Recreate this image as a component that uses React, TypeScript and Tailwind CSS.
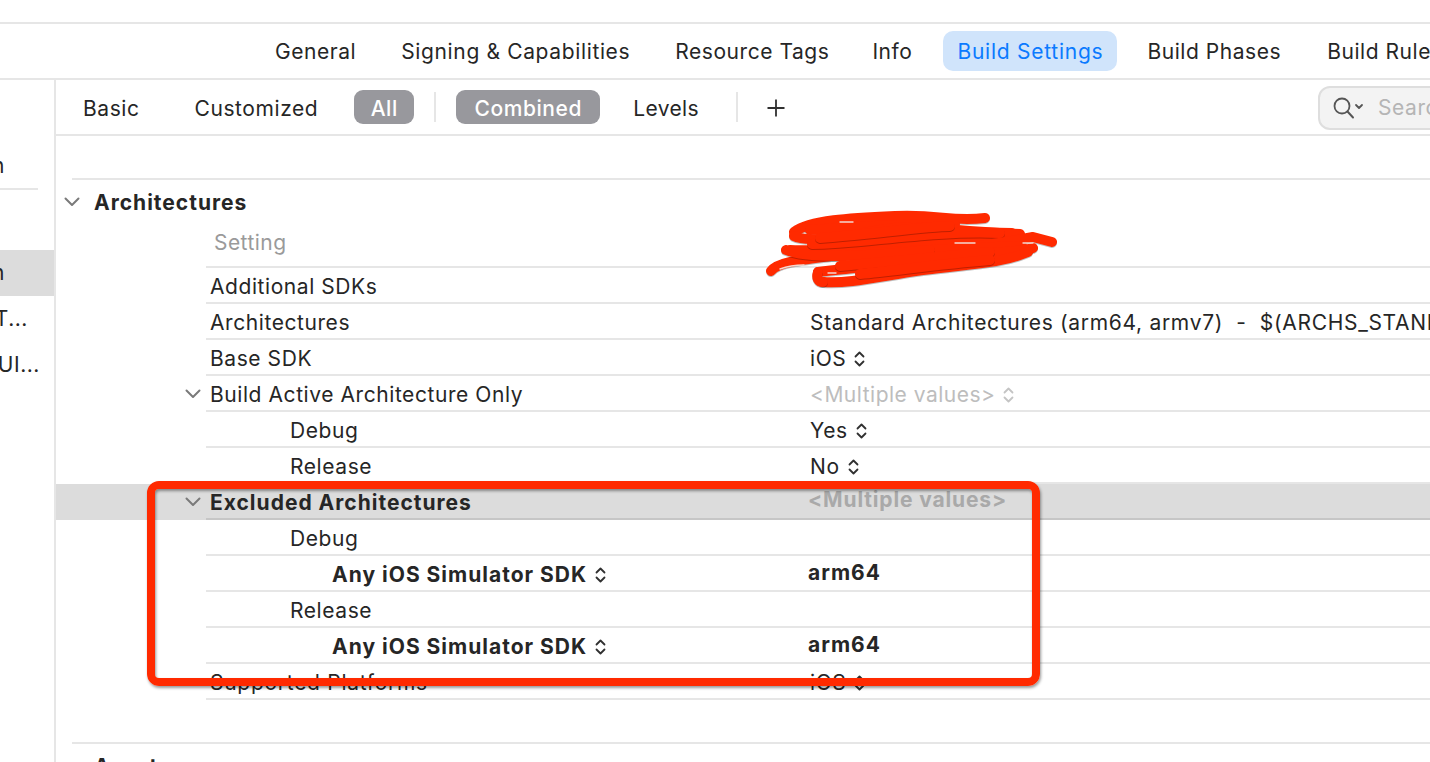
const INK = "text-[#262626]";

function Chevron({ className = "" }: { className?: string }) {
  return (
    <svg width="16" height="10" viewBox="0 0 16 10" fill="none" className={className}>
      <path d="M1.5 1.5 8 8l6.5-6.5" stroke="#7a7a7a" strokeWidth="2" strokeLinecap="round" strokeLinejoin="round" />
    </svg>
  );
}

function UpDown({ light = false }: { light?: boolean }) {
  const c = light ? "#c4c4c4" : "#303030";
  return (
    <svg width="11" height="16" viewBox="0 0 11 16" fill="none" className="ml-[8px] shrink-0">
      <path d="M1.5 5.5 5.5 1.5l4 4M1.5 10.5l4 4 4-4" stroke={c} strokeWidth="1.8" strokeLinecap="round" strokeLinejoin="round" />
    </svg>
  );
}

type RowProps = {
  label: string;
  indent?: number;
  bold?: boolean;
  open?: boolean;
  selected?: boolean;
  value?: string;
  valueKind?: "plain" | "select" | "muted" | "mutedBold" | "bold";
  labelSelect?: boolean;
  wideLabel?: boolean;
};

const indents: Record<number, string> = { 0: "pl-[4px]", 1: "pl-[84px]", 2: "pl-[126px]" };
const BOLD = "font-bold tracking-[1px]";

function Row({ label, indent = 0, bold, open, selected, value, valueKind = "plain", labelSelect, wideLabel }: RowProps) {
  return (
    <div className={`flex ${selected ? "bg-[#dcdcdc]" : ""}`}>
      <div className="w-[150px] shrink-0 flex items-center justify-end pr-[5px]">{open && <Chevron />}</div>
      <div className={`flex-1 h-9 border-b-2 flex items-center whitespace-pre ${selected ? "border-[#c6c6c6]" : "border-[#e6e6e6]"}`}>
        <div className={`w-[604px] shrink-0 flex items-center pt-[3px] ${indents[indent]} ${bold ? BOLD : ""} ${wideLabel ? "tracking-[0.72px]" : ""}`}>
          <span>{label}</span>
          {labelSelect && <UpDown />}
        </div>
        {value && valueKind === "plain" && <span className="pt-[3px] tracking-[0.69px]">{value}</span>}
        {value && valueKind === "select" && (
          <span className="flex items-center pt-[3px]">
            {value}
            <UpDown />
          </span>
        )}
        {value && valueKind === "muted" && (
          <span className="flex items-center pt-[3px] text-[#bdbdbd] tracking-[0.5px]">
            {value}
            <UpDown light />
          </span>
        )}
        {value && valueKind === "mutedBold" && <span className="-ml-[2px] -mt-[2px] text-[#a9a9a9] font-bold tracking-[0.85px]">{value}</span>}
        {value && valueKind === "bold" && <span className={`-ml-[2px] -mt-[1px] ${BOLD}`}>{value}</span>}
      </div>
    </div>
  );
}

function SectionHeader({ title, chevron = true }: { title: string; chevron?: boolean }) {
  return (
    <div className={`h-11 flex items-center pl-[8px] ${BOLD}`}>
      {chevron ? <Chevron /> : <span className="w-4" />}
      <span className="ml-[14px] pt-[1px]">{title}</span>
    </div>
  );
}

function SideItem({ text, className = "" }: { text: string; className?: string }) {
  return <div className={`flex justify-end overflow-hidden whitespace-nowrap ${className}`}>{text}</div>;
}

const strokes = [
  "M44 32C60 20 100 18 145 16S200 22 235 18",
  "M60 30C110 26 160 24 205 24",
  "M44 36C55 42 90 38 130 30S200 32 262 33",
  "M40 50C70 52 120 46 166 44S240 32 270 34",
  "M62 44C110 44 180 30 250 33",
  "M70 38C120 34 180 26 200 26",
  "M100 54C160 54 230 48 283 37L302 42",
  "M21 71C28 62 50 60 81 56S180 50 272 46",
  "M68 72C120 66 170 62 216 56S270 52 283 48",
  "M73 82C100 84 130 76 173 70S250 64 278 52",
  "M68 72C66 78 68 82 73 82",
  "M36 50C60 60 120 56 180 50",
  "M90 66C130 62 180 58 240 52",
  "M110 74C150 70 190 64 240 60",
];

export default function App() {
  return (
    <div
      className={`relative w-[1430px] h-[762px] overflow-hidden bg-white text-[21px] leading-[28px] tracking-[0.57px] ${INK}`}
      style={{ fontFamily: "Inter, 'Liberation Sans', sans-serif" }}
    >
      <div className="h-6 border-b-2 border-[#e6e6e6]" />

      <div className="h-14 border-b-2 border-[#e6e6e6] flex items-center pl-[275px] gap-[45px] whitespace-nowrap tracking-[0.55px]">
        <span className="pt-[2px]">General</span>
        <span className="pt-[2px] tracking-[0.64px]">Signing &amp; Capabilities</span>
        <span className="pt-[2px]">Resource Tags</span>
        <span className="pt-[2px] -ml-[2px]">Info</span>
        <span className="-ml-[14px] -mr-[15px] h-10 pt-[2px] pl-[14px] pr-[14px] flex items-center rounded-[10px] bg-[#d0e4fb] text-[#0a7aff] tracking-[0.75px]">Build Settings</span>
        <span className="pt-[2px]">Build Phases</span>
        <span className="pt-[2px] ml-[1px]">Build Rules</span>
      </div>

      <div className="flex h-[682px]">
        <aside className="w-[56px] shrink-0 border-r-2 border-[#e6e6e6] pt-[72px]">
          <SideItem text="Main" className="pr-[49px]" />
          <div className="mt-[8px] h-[2px] w-[38px] bg-[#e6e6e6]" />
          <SideItem text="Main" className="mt-[60px] h-[46px] items-center bg-[#dcdcdc] pr-[49px]" />
          <SideItem text="AppT..." className="mt-[8px] h-[30px] items-center pr-[26px]" />
          <SideItem text="AppUI..." className="mt-[16px] h-[30px] items-center pr-[14px]" />
        </aside>

        <main className="flex-1 min-w-0 overflow-hidden">
          <div className="relative h-14 border-b-2 border-[#e6e6e6] flex items-center pl-[27px] whitespace-nowrap">
            <span className="pt-[3px]">Basic</span>
            <span className="ml-[55px] pt-[3px]">Customized</span>
            <span className="ml-[36px] h-[34px] w-[60px] pt-[3px] flex items-center justify-center rounded-[9px] bg-[#98989d] text-white font-medium">All</span>
            <span className="ml-[20px] h-[30px] w-[2px] bg-[#e6e6e6]" />
            <span className="ml-[20px] h-[34px] w-[144px] pt-[3px] flex items-center justify-center rounded-[9px] bg-[#98989d] text-white font-medium">Combined</span>
            <span className="ml-[33px] pt-[3px] tracking-[0.35px]">Levels</span>
            <span className="ml-[37px] h-[30px] w-[2px] bg-[#e6e6e6]" />
            <svg width="20" height="20" viewBox="0 0 20 20" fill="none" className="ml-[28px] mt-[2px]">
              <path d="M10 1.5v17M1.5 10h17" stroke="#303030" strokeWidth="1.8" />
            </svg>
            <div className="absolute left-[1262px] top-[6px] h-[44px] w-[140px] rounded-[12px] border-2 border-[#dedede] bg-[#f3f3f3] flex items-center pl-[12px]">
              <svg width="34" height="24" viewBox="0 0 34 24" fill="none">
                <circle cx="10" cy="10" r="7.5" stroke="#555" strokeWidth="1.8" />
                <path d="m15.5 15.5 5.5 6" stroke="#555" strokeWidth="2" strokeLinecap="round" />
                <path d="m24 9 3 3 3-3" stroke="#555" strokeWidth="1.8" strokeLinecap="round" strokeLinejoin="round" />
              </svg>
              <span className="ml-[12px] text-[#b5b5b5]">Search</span>
            </div>
          </div>

          <div className="h-11 ml-[16px] border-b-2 border-[#e6e6e6]" />

          <SectionHeader title="Architectures" />

          <div className="flex">
            <div className="w-[150px] shrink-0" />
            <div className="flex-1 h-11 border-b-2 border-[#e6e6e6] flex items-center pl-[8px] pb-[5px] text-[#9a9a9a] tracking-[0.45px]">Setting</div>
          </div>

          <Row label="Additional SDKs" />
          <Row label="Architectures" value="Standard Architectures (arm64, armv7)  -  $(ARCHS_STANDARD)" />
          <Row label="Base SDK" value="iOS" valueKind="select" />
          <Row label="Build Active Architecture Only" open value="<Multiple values>" valueKind="muted" />
          <Row label="Debug" indent={1} value="Yes" valueKind="select" />
          <Row label="Release" indent={1} value="No" valueKind="select" />
          <Row label="Excluded Architectures" open bold selected value="<Multiple values>" valueKind="mutedBold" />
          <Row label="Debug" indent={1} />
          <Row label="Any iOS Simulator SDK" indent={2} bold labelSelect value="arm64" valueKind="bold" />
          <Row label="Release" indent={1} />
          <Row label="Any iOS Simulator SDK" indent={2} bold labelSelect value="arm64" valueKind="bold" />
          <Row label="Supported Platforms" wideLabel value="iOS" valueKind="select" />

          <div className="h-11 ml-[16px] border-b-2 border-[#e6e6e6]" />
          <SectionHeader title="Assets" chevron={false} />
        </main>
      </div>

      {/* annotation: scribble */}
      <svg width="330" height="100" viewBox="0 0 330 100" fill="none" className="absolute left-[750px] top-[200px]">
        <g stroke="#ff2a00" strokeWidth="10" strokeLinecap="round" strokeLinejoin="round">
          {strokes.map((d) => (
            <path key={d} d={d} className="drop-shadow-[0.5px_1px_0.5px_rgba(0,0,0,0.25)]" />
          ))}
        </g>
        <g stroke="#f4d8d0" strokeWidth="1.4" strokeLinecap="round">
          <path d="M90 22h13" />
          <path d="M205 43h20" />
          <path d="M273 43h10" />
          <path d="M30 69c8-3 16-4 24-4" />
          <path d="M78 73h8" />
        </g>
      </svg>

      {/* annotation: red box */}
      <div className="absolute left-[147px] top-[481px] w-[893px] h-[205px] rounded-[12px] border-[8px] border-[#ff2a00] shadow-[1px_2px_3px_rgba(0,0,0,0.4),inset_1px_2px_3px_rgba(0,0,0,0.4)]" />
    </div>
  );
}
